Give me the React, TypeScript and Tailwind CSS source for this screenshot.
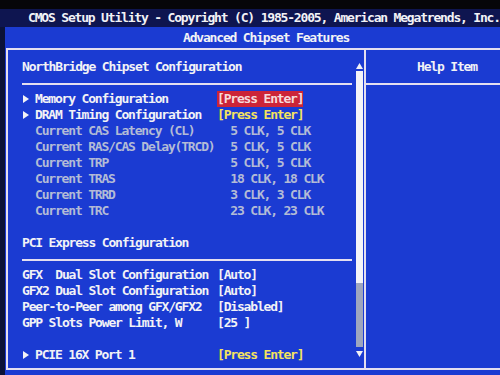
import type { ReactNode } from "react";

type Tone = "white" | "gray" | "yellow" | "red";

type Row =
  | { type: "item"; label: string; value?: string; arrow?: boolean; indent?: boolean; tone?: Tone; valueTone?: Tone }
  | { type: "blank" }
  | { type: "rule" };

const toneClass: Record<Tone, string> = {
  white: "text-[#f2f2f6]",
  gray: "text-[#b3bbd6]",
  yellow: "text-[#f5e35e]",
  red: "bg-[#cc2438] text-[#f6dada]",
};

const rows: Row[] = [
  { type: "item", arrow: true, label: "Memory Configuration", value: "[Press Enter]", valueTone: "red" },
  { type: "item", arrow: true, label: "DRAM Timing Configuration", value: "[Press Enter]", valueTone: "yellow" },
  { type: "item", indent: true, tone: "gray", label: "Current CAS Latency (CL)", value: "  5 CLK, 5 CLK", valueTone: "gray" },
  { type: "item", indent: true, tone: "gray", label: "Current RAS/CAS Delay(TRCD)", value: "  5 CLK, 5 CLK", valueTone: "gray" },
  { type: "item", indent: true, tone: "gray", label: "Current TRP", value: "  5 CLK, 5 CLK", valueTone: "gray" },
  { type: "item", indent: true, tone: "gray", label: "Current TRAS", value: "  18 CLK, 18 CLK", valueTone: "gray" },
  { type: "item", indent: true, tone: "gray", label: "Current TRRD", value: "  3 CLK, 3 CLK", valueTone: "gray" },
  { type: "item", indent: true, tone: "gray", label: "Current TRC", value: "  23 CLK, 23 CLK", valueTone: "gray" },
  { type: "blank" },
  { type: "item", label: "PCI Express Configuration" },
  { type: "rule" },
  { type: "item", label: "GFX  Dual Slot Configuration", value: "[Auto]" },
  { type: "item", label: "GFX2 Dual Slot Configuration", value: "[Auto]" },
  { type: "item", label: "Peer-to-Peer among GFX/GFX2", value: "[Disabled]" },
  { type: "item", label: "GPP Slots Power Limit, W", value: "[25 ]" },
  { type: "blank" },
  { type: "item", arrow: true, label: "PCIE 16X Port 1", value: "[Press Enter]", valueTone: "yellow" },
];

const Arrow = () => (
  <svg width="6" height="8" viewBox="0 0 6 8">
    <polygon points="0,0 6,4 0,8" fill="#f2f2f6" />
  </svg>
);

const Triangle = ({ up }: { up?: boolean }) => (
  <svg width="7" height="6" viewBox="0 0 7 6">
    <polygon points={up ? "3.5,0 7,6 0,6" : "0,0 7,0 3.5,6"} fill="#f2f2f6" />
  </svg>
);

const Line = ({ className = "" }: { className?: string }) => <div className={`h-[2px] bg-[#e4dff0] ${className}`} />;

const renderRow = (row: Row, i: number): ReactNode => {
  if (row.type === "blank") {
    return <div key={i} className="h-[16px]" />;
  }
  if (row.type === "rule") {
    return (
      <div key={i} className="h-[16px] pt-[8px]">
        <Line />
      </div>
    );
  }
  const tone = row.tone ?? "white";
  return (
    <div key={i} className="flex h-[16px] items-center leading-[16px] whitespace-pre">
      <span className="flex w-[195px] shrink-0 items-center">
        {row.arrow ? (
          <span className="flex w-[13px] shrink-0 items-center pl-[1px]">
            <Arrow />
          </span>
        ) : row.indent ? (
          <span className="w-[13px] shrink-0" />
        ) : null}
        <span className={toneClass[tone]}>{row.label}</span>
      </span>
      {row.value && <span className={toneClass[row.valueTone ?? "white"]}>{row.value}</span>}
    </div>
  );
};

const App = () => {
  return (
    <div className="flex h-[375px] w-[500px] flex-col overflow-hidden bg-[#0b1033] font-['DejaVu_Sans_Mono','Liberation_Mono',monospace] text-[13px] font-bold tracking-[-1.18px] text-[#f2f2f6]">
      <div className="h-[9px] shrink-0 bg-[#060609]" />
      <div className="h-[18px] shrink-0 whitespace-pre bg-[#0e1550] pl-[28px] leading-[18px]">
        CMOS Setup Utility - Copyright (C) 1985-2005, American Megatrends, Inc.
      </div>
      <div className="flex flex-1">
        <div className="w-[5px] shrink-0 bg-[#0b1238]" />
        <div className="flex flex-1 flex-col bg-[#1b3bd2]">
          <div className="h-[21px] shrink-0 whitespace-pre pl-[178px] leading-[21px]">Advanced Chipset Features</div>

          <div className="ml-[1px] flex h-[322px] shrink-0 border-t-2 border-b-2 border-l-2 border-[#e4dff0]">
            {/* left panel */}
            <div className="flex w-[358px] shrink-0 border-r-2 border-[#e4dff0]">
              <div className="flex w-[347px] shrink-0 flex-col pl-[14px] pr-[3px]">
                <div className="h-[33px] whitespace-pre leading-[33px]">NorthBridge Chipset Configuration</div>
                <Line />
                <div className="flex flex-col pt-[6px]">{rows.map(renderRow)}</div>
              </div>
              <div className="ml-[1px] flex w-[7px] shrink-0 flex-col items-center pt-[13px]">
                <Triangle up />
                <div className="mt-[2px] h-[212px] w-[7px] bg-[#f4f4f8]" />
                <div className="h-[64px] w-[7px] bg-[#9ea6bf]" />
                <div className="mt-[4px]">
                  <Triangle />
                </div>
              </div>
            </div>

            {/* help panel */}
            <div className="flex flex-1 flex-col">
              <div className="h-[33px] whitespace-pre pl-[51px] leading-[33px]">Help Item</div>
              <Line />
            </div>
          </div>
          <div className="flex-1" />
        </div>
      </div>
    </div>
  );
};

export default App;
